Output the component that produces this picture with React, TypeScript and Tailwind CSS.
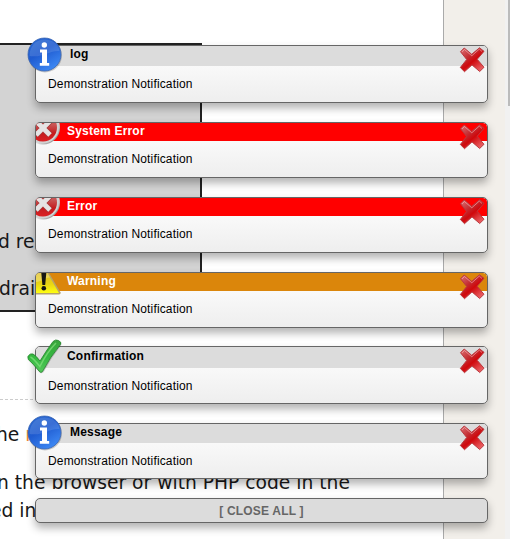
import React from "react";

type Kind = "info" | "error" | "warning" | "success";

function InfoIcon() {
  return (
    <svg className="absolute -left-[9px] -top-[9px]" width="36" height="36" viewBox="0 0 36 36">
      <defs>
        <linearGradient id="blue" x1="0" y1="0" x2="0.6" y2="1">
          <stop offset="0" stopColor="#2d6cd0" />
          <stop offset="0.5" stopColor="#1f5bd0" />
          <stop offset="1" stopColor="#3c86f2" />
        </linearGradient>
      </defs>
      <circle cx="18" cy="18.4" r="17" fill="#00000030" />
      <circle cx="17.5" cy="17.5" r="16.5" fill="url(#blue)" stroke="#3a66b4" strokeWidth="0.8" />
      <path d="M2.5 19C2.5 9 9 2.5 17.5 2.5S32 8 32.5 14C23 13 16 21 2.5 19Z" fill="#fff" opacity="0.12" />
      <circle cx="17.3" cy="8" r="2.7" fill="#fff" />
      <path d="M13 12.6H20V26H22.2V28.8H12.8V26H15V15.4H13Z" fill="#fff" />
    </svg>
  );
}

function ErrorIcon() {
  return (
    <svg className="absolute left-0 top-0" width="25" height="24" viewBox="0 0 25 24">
      <defs>
        <linearGradient id="silver" x1="0" y1="0" x2="1" y2="1">
          <stop offset="0" stopColor="#777" />
          <stop offset="0.65" stopColor="#ddd" />
          <stop offset="1" stopColor="#666" />
        </linearGradient>
        <linearGradient id="disc" x1="0" y1="0" x2="0" y2="1">
          <stop offset="0.4" stopColor="#c95555" />
          <stop offset="0.7" stopColor="#c41c1f" />
          <stop offset="1" stopColor="#dc2023" />
        </linearGradient>
      </defs>
      <circle cx="7" cy="4.5" r="17" fill="url(#silver)" />
      <circle cx="7" cy="4.5" r="15.8" fill="#d2d2d2" />
      <circle cx="7" cy="4.5" r="14" fill="url(#disc)" />
      <path d="M0 -2L14 12M14 -2L0 12" stroke="#a83838" strokeWidth="6.3" />
      <path d="M0 -2L14 12M14 -2L0 12" stroke="#e5e3e3" strokeWidth="4.8" />
    </svg>
  );
}

function WarningIcon() {
  return (
    <svg className="absolute left-0 top-0" width="27" height="23" viewBox="0 0 27 23">
      <defs>
        <linearGradient id="yellow" x1="0" y1="0" x2="0" y2="1">
          <stop offset="0" stopColor="#dfbd24" />
          <stop offset="0.55" stopColor="#e9d514" />
          <stop offset="1" stopColor="#ffff10" />
        </linearGradient>
      </defs>
      <path d="M0 0H13L24.6 19.5Q25 21.5 23 21.5H0Z" fill="#b5a36a" />
      <path d="M0 0H11.5L23 20H0Z" fill="url(#yellow)" />
      <path d="M0 0H11.5L14 4.5C8 5 5 9 0 9Z" fill="#fff" opacity="0.25" />
      <path d="M5.3 0H10.3L9.2 12H6.4Z" fill="#171713" />
      <circle cx="7.8" cy="15.3" r="2.3" fill="#171713" />
    </svg>
  );
}

function CheckIcon() {
  return (
    <svg className="absolute -left-[9px] -top-[8px]" width="36" height="36" viewBox="0 0 36 36">
      <defs>
        <linearGradient id="green" x1="0" y1="0" x2="0" y2="1">
          <stop offset="0" stopColor="#39a33c" />
          <stop offset="0.55" stopColor="#35b941" />
          <stop offset="1" stopColor="#56c95c" />
        </linearGradient>
      </defs>
      <path d="M1 18Q3 14.5 6 15.5Q9 17 13.3 22.7Q19 13 26.5 3.2Q29 .5 32 2.2Q35.8 4 34 6.5Q24 19 16.7 33Q14.5 35.5 12 33Q6 25 1.4 21Z" fill="#00000030" />
      <path d="M.8 17.5Q3 14 6 15Q9 16.5 13 22Q19 12 26 2.5Q28.5 0 31.5 1.5Q35 3.2 33.5 5.5Q23 18 15.5 32.5Q14 34.7 12 32Q6 24.5 1.3 20.5Z" fill="url(#green)" stroke="#23832b" strokeWidth="0.8" />
      <path d="M3.4 18Q6 19 12.9 27.5Q20 13 29 4" fill="none" stroke="#8ae383" strokeWidth="1.6" opacity="0.65" />
    </svg>
  );
}

function CloseIcon() {
  return (
    <svg className="absolute right-[1px] top-0" width="28" height="28" viewBox="0 0 28 28">
      <defs>
        <linearGradient id="cross" x1="0" y1="0" x2="0.8" y2="1">
          <stop offset="0" stopColor="#dd777b" />
          <stop offset="0.4" stopColor="#c42b30" />
          <stop offset="0.6" stopColor="#cf080c" />
          <stop offset="1" stopColor="#ec6568" />
        </linearGradient>
      </defs>
      <path d="M2.5 5.7L6.2 2L13.7 8.3L21.5 1.8L26 5.3L19.2 13.3L26 21.3L21.7 25.5L14 18.9L6.5 25.7L2.3 21.5L8.7 13.5Z" fill="url(#cross)" stroke="#b93a3f" strokeWidth="1" strokeLinejoin="round" />
      <path d="M4 5.9L6.5 3.5L13.8 9.8L21.3 3.1L24 5.5" fill="none" stroke="#ffc4c4" strokeWidth="0.8" opacity="0.7" />
    </svg>
  );
}

const icons: Record<Kind, () => React.JSX.Element> = {
  info: InfoIcon,
  error: ErrorIcon,
  warning: WarningIcon,
  success: CheckIcon,
};

const notices: { title: string; kind: Kind; card: string; header: string; label: string }[] = [
  { title: "log", kind: "info", card: "h-[58px] mb-[19px]", header: "h-5 leading-[17px] bg-[#dcdcdc] text-black", label: "pl-[34px]" },
  { title: "System Error", kind: "error", card: "h-[56px] mb-[19px] overflow-hidden", header: "h-[18px] leading-[17px] bg-[#ff0000] text-white", label: "pl-[31px]" },
  { title: "Error", kind: "error", card: "h-[56px] mb-[19px] overflow-hidden", header: "h-[18px] leading-[17px] bg-[#ff0000] text-white", label: "pl-[31px]" },
  { title: "Warning", kind: "warning", card: "h-[56px] mb-[18px] overflow-hidden", header: "h-[18px] leading-[17px] bg-[#db860b] text-white", label: "pl-[31px]" },
  { title: "Confirmation", kind: "success", card: "h-[58px] mb-[19px]", header: "h-[21px] leading-[19px] bg-[#dcdcdc] text-black", label: "pl-[31px]" },
  { title: "Message", kind: "info", card: "h-[56px] mb-[19px]", header: "h-[19px] leading-[17px] bg-[#dcdcdc] text-black", label: "pl-[34px]" },
];

function Notice({ title, kind, card, header, label }: (typeof notices)[number]) {
  const Icon = icons[kind];
  return (
    <div className={`relative rounded-[5px] border border-[#666] bg-linear-to-b from-white to-[#eee] shadow-[0_5px_8px_rgba(0,0,0,0.3)] ${card}`}>
      <div className={`rounded-t-[4px] text-xs font-bold tracking-[0.2px] ${header} ${label}`}>{title}</div>
      <p className="pl-3 pt-[10px] text-xs leading-4 tracking-[0.15px] text-black">Demonstration Notification</p>
      <Icon />
      <CloseIcon />
    </div>
  );
}

export default function App() {
  return (
    <div className="relative flex h-[539px] w-[510px] overflow-hidden bg-white">
      <main className="flex w-[444px] shrink-0 flex-col border-r border-[#aaa] pt-[43px] font-['DejaVu_Sans',Verdana,sans-serif] text-[18.7px] leading-7 whitespace-nowrap text-[#181818]">
        <section className="h-[269px] w-[202px] border-y-2 border-r-2 border-[#222] bg-[#d3d3d3] pt-[183px]">
          <p className="-ml-[2px] mb-[19px]">d re</p>
          <p className="-ml-px">drai</p>
        </section>
        <div className="h-[88px] border-b border-dashed border-[#ccc]" />
        <p className="-ml-[4px] mt-[21px]">he <span className="text-[#f18732]">m</span></p>
        <p className="-ml-[3px] mt-[20px]">n the browser or with PHP code in the</p>
        <p className="-ml-[10px]">ed in</p>
      </main>
      <aside className="w-[61px] bg-[#f2efea]" />
      <div className="flex flex-1 justify-end bg-[#f1f1f1]"><div className="h-[106px] w-[2px] bg-[#bbb]" /></div>
      <div className="absolute left-[35px] top-[45px] flex w-[453px] flex-col font-['Liberation_Sans',Arial,sans-serif]">
        {notices.map((notice) => <Notice key={notice.title} {...notice} />)}
        <button className="h-[25px] rounded-[5px] border border-[#666] bg-[#dcdcdc] text-xs font-bold leading-[22px] tracking-[0.2px] text-[#666] shadow-[0_5px_8px_rgba(0,0,0,0.3)]">[ CLOSE ALL ]</button>
      </div>
    </div>
  );
}
